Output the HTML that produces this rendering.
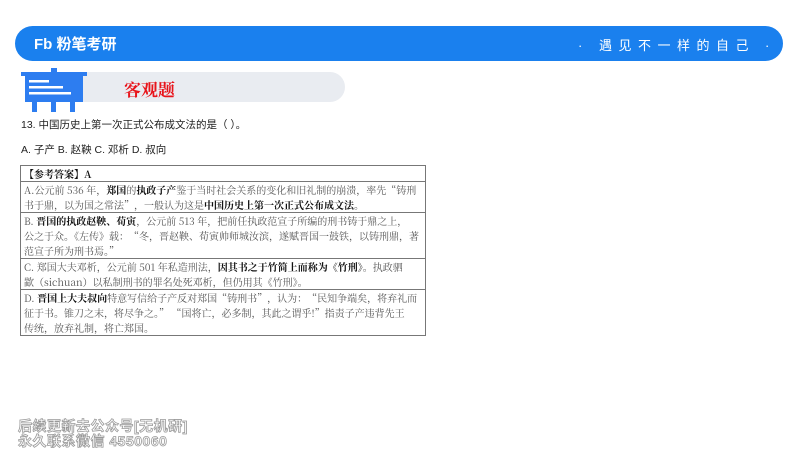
<!DOCTYPE html>
<html><head><meta charset="utf-8"><style>
body{margin:0;width:800px;height:450px;background:#fff;position:relative;overflow:hidden;font-family:"Liberation Sans","Noto Sans CJK SC",sans-serif}
.bar{position:absolute;left:15px;top:26px;width:768px;height:35px;background:#1a80ee;border-radius:18px}
.logo{position:absolute;left:34px;top:33px;color:#fff;font-weight:bold;font-size:15px;letter-spacing:0px}
.slogan{position:absolute;left:578px;top:35px;color:#fff;font-size:13px;letter-spacing:6.5px}
.grey{position:absolute;left:70px;top:72px;width:275px;height:30px;background:#e9ecf1;border-radius:0 15px 15px 0}
.title{position:absolute;left:124px;top:76px;color:#e8141b;font-size:17px;font-weight:bold;font-family:"Noto Serif CJK SC",serif}
.q{position:absolute;left:21px;font-size:10.5px;color:#222}
table{position:absolute;left:20px;top:165px;width:406px;border-collapse:collapse;font-family:"Noto Serif CJK SC",serif;font-size:10px;color:#555;line-height:15px;table-layout:fixed}
td{border:1.5px solid #777;padding:0 3px;white-space:nowrap;overflow:hidden}
b{color:#111}
.wm{position:absolute;left:18px;font-size:14px;font-weight:bold;color:#fff;-webkit-text-stroke:0.8px #999;letter-spacing:0.5px}
</style></head><body>
<div class="bar"></div>
<div class="logo">Fb 粉笔考研</div>
<div class="slogan">· 遇见不一样的自己 ·</div>
<div class="grey"></div>
<svg style="position:absolute;left:18px;top:68px" width="72" height="46">
<rect x="3" y="4" width="66" height="4" fill="#2d7df0"/>
<rect x="33" y="0" width="6" height="6" fill="#2d7df0"/>
<rect x="7" y="7" width="58" height="27" fill="#2d7df0"/>
<rect x="11" y="12" width="20" height="2.5" fill="#fff"/>
<rect x="11" y="18" width="34" height="2.5" fill="#fff"/>
<rect x="11" y="24" width="42" height="2.5" fill="#fff"/>
<rect x="14" y="34" width="5" height="10" fill="#2d7df0"/>
<rect x="33" y="34" width="5" height="10" fill="#2d7df0"/>
<rect x="52" y="34" width="5" height="10" fill="#2d7df0"/>
</svg>
<div class="title">客观题</div>
<div class="q" style="top:117px">13. 中国历史上第一次正式公布成文法的是（ ）。</div>
<div class="q" style="top:142px">A. 子产 B. 赵鞅 C. 邓析 D. 叔向</div>
<table>
<tr><td><b>【参考答案】A</b></td></tr>
<tr><td>A.公元前 536 年，<b>郑国</b>的<b>执政子产</b>鉴于当时社会关系的变化和旧礼制的崩溃，率先“铸刑<br>书于鼎，以为国之常法”，一般认为这是<b>中国历史上第一次正式公布成文法</b>。</td></tr>
<tr><td>B. <b>晋国的执政赵鞅、荀寅</b>，公元前 513 年，把前任执政范宣子所编的刑书铸于鼎之上，<br>公之于众。《左传》载：“冬，晋赵鞅、荀寅帅师城汝滨，遂赋晋国一鼓铁，以铸刑鼎，著<br>范宣子所为刑书焉。”</td></tr>
<tr><td>C. 郑国大夫邓析，公元前 501 年私造刑法，<b>因其书之于竹简上而称为《竹刑》</b>。执政驷<br>歂（sichuan）以私制刑书的罪名处死邓析，但仍用其《竹刑》。</td></tr>
<tr><td>D. <b>晋国上大夫叔向</b>特意写信给子产反对郑国“铸刑书”，认为：“民知争端矣，将弃礼而<br>征于书。锥刀之末，将尽争之。” “国将亡，必多制，其此之谓乎!”指责子产违背先王<br>传统，放弃礼制，将亡郑国。</td></tr>
</table>
<div class="wm" style="top:416px">后续更新去公众号[无机研]</div>
<div class="wm" style="top:431px">永久联系微信 4550060</div>
</body></html>
